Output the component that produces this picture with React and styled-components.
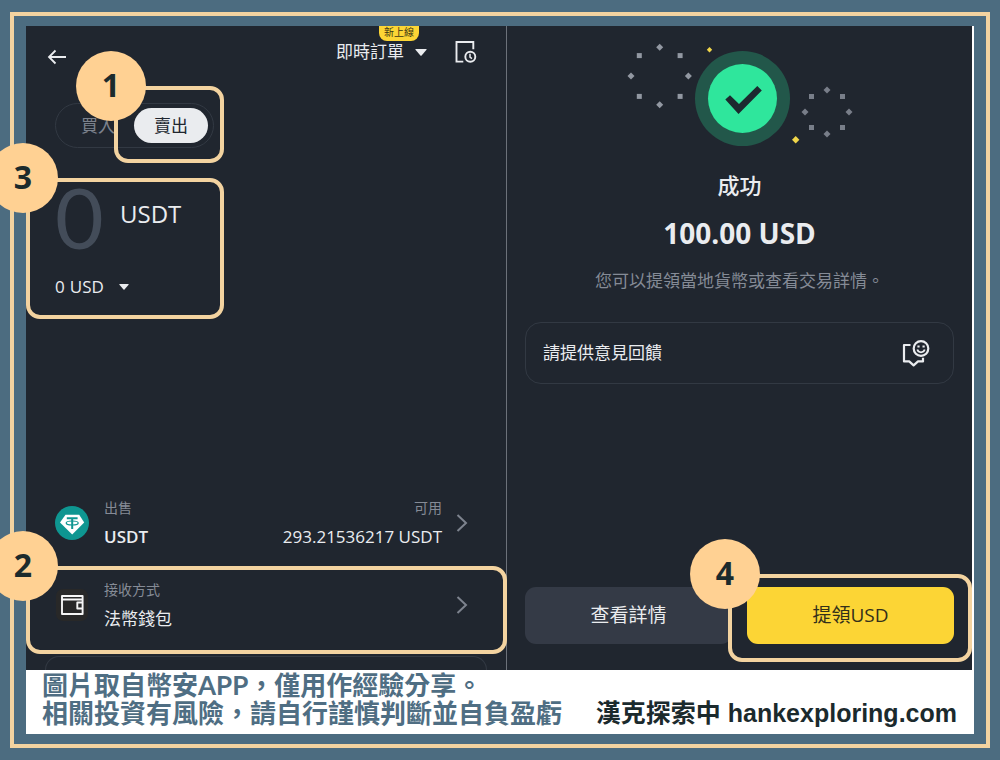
import React from 'react';
import styled, { createGlobalStyle } from 'styled-components';

const c = {
  slate: '#4c6c80',
  sand: '#f3d3a0',
  peach: '#ffd193',
  panel: '#20262f',
  line: '#323943',
  text: '#eaecef',
  muted: '#858b96',
  yellow: '#fcd535',
};

const GlobalStyle = createGlobalStyle`
  *, *::before, *::after { box-sizing: border-box; }
  body {
    margin: 0;
    background: ${c.slate};
    color: ${c.text};
    font-family: 'Open Sans', 'Noto Sans CJK TC', sans-serif;
    font-size: 17px;
    overflow-x: hidden;
  }
  button, input, select { font: inherit; color: inherit; margin: 0; padding: 0; border: 0; background: none; }
  svg { display: block; flex: none; }
  p, h2 { margin: 0; }
`;

const Page = styled.div`
  min-height: 100vh;
  padding: 12px 10px;
  display: flex;
`;

const Frame = styled.div`
  flex: 1;
  min-width: 0;
  border: 4px solid ${c.sand};
  padding: 10px 12px;
  display: flex;
  flex-direction: column;
`;

const Screens = styled.main`
  flex: 1;
  display: grid;
  grid-template-columns: minmax(0, 480fr) minmax(0, 466fr);
  padding-right: 2px;
  background: #fff;
`;

const SellPanel = styled.section`
  background: ${c.panel};
  display: flex;
  flex-direction: column;
`;

const DonePanel = styled.section`
  background: ${c.panel};
  border-left: 1px solid #6c717a;
  padding: 14px 18px 26px;
  display: flex;
  flex-direction: column;
  align-items: center;
`;

const Callout = styled.div`
  position: absolute;
  inset: ${(p) => p.$inset || '0'};
  border: 4px solid ${c.sand};
  border-radius: 14px;
  pointer-events: none;
  z-index: 2;
`;

const Step = styled.span`
  position: absolute;
  left: -42px;
  top: -39px;
  width: 70px;
  height: 70px;
  border-radius: 50%;
  background: ${c.peach};
  color: #1c2b2c;
  font-size: 32px;
  font-weight: 700;
  line-height: 68px;
  text-align: center;
`;

const Marker = ({ n, inset }) => (
  <Callout $inset={inset}>
    <Step>{n}</Step>
  </Callout>
);

const Header = styled.header`
  height: 52px;
  padding: 0 29px 0 20px;
  display: flex;
  align-items: center;
`;

const IconButton = styled.button`
  display: grid;
  place-items: center;
  cursor: pointer;
`;

const BackButton = styled(IconButton)`
  align-self: flex-end;
  width: 22px;
  height: 42px;
  margin-right: auto;
`;

const OrderType = styled.div`
  position: relative;
  display: flex;
  align-items: center;
  gap: 11px;
  margin-right: 28px;
`;

const PlainSelect = styled.select`
  appearance: none;
  outline: none;
  cursor: pointer;
  line-height: 24px;
  option { color: #000; }
`;

const NewBadge = styled.span`
  position: absolute;
  left: 43px;
  top: -14px;
  height: 15px;
  padding: 0 5px;
  border-radius: 0 0 8px 8px;
  background: ${c.yellow};
  color: #3a3413;
  font-size: 10px;
  line-height: 12px;
`;

const Toggle = styled.div`
  align-self: flex-start;
  display: flex;
  align-items: center;
  height: 45px;
  margin: 25px 0 0 29px;
  padding: 0 5px 0 15px;
  border: 1px solid ${c.line};
  border-radius: 23px;
`;

const ToggleSlot = styled.div`
  position: relative;
`;

const ToggleButton = styled.button`
  height: 35px;
  padding: 0 ${(p) => (p['aria-pressed'] ? 20 : 10)}px 2px;
  border-radius: 18px;
  background: ${(p) => (p['aria-pressed'] ? '#eaecef' : 'transparent')};
  color: ${(p) => (p['aria-pressed'] ? '#20262f' : '#7c828d')};
  margin-left: ${(p) => (p['aria-pressed'] ? 9 : 0)}px;
  cursor: pointer;
`;

const Amount = styled.div`
  position: relative;
  width: 198px;
  max-width: 100%;
  margin-top: 30px;
  padding: 0 0 3px 29px;
`;

const AmountRow = styled.label`
  display: flex;
  align-items: center;
  gap: 13px;
  height: 80px;
  padding-bottom: 4px;
`;

const AmountInput = styled.input`
  width: 52px;
  height: 80px;
  font-family: Lato, sans-serif;
  font-size: 84px;
  line-height: 80px;
  color: #434c59;
  outline: none;
`;

const Unit = styled.span`
  font-size: 24px;
  line-height: 28px;
  padding-bottom: 4px;
`;

const FiatRow = styled.label`
  display: flex;
  align-items: center;
  height: 58px;
  line-height: 24px;
  gap: 5px;
  svg { margin-left: 9px; }
`;

const Rows = styled.div`
  margin-top: auto;
`;

const Row = styled.div`
  position: relative;
  display: flex;
  align-items: center;
  height: 82px;
  padding: 0 38px 0 29px;
  svg:last-of-type { margin-left: 14px; }
`;

const RowText = styled.div`
  flex: ${(p) => (p.$end ? 'none' : 1)};
  text-align: ${(p) => (p.$end ? 'right' : 'left')};
  margin-left: 15px;
  padding-bottom: 2px;
  line-height: 29px;
`;

const Label = styled.div`
  font-size: 14px;
  color: ${c.muted};
`;

const Value = styled.div`
  font-weight: ${(p) => (p.$strong ? 600 : 400)};
`;

const NextCard = styled.div`
  height: 14px;
  margin: 10px 19px 0;
  border: 1px solid ${c.line};
  border-bottom: 0;
  border-radius: 14px 14px 0 0;
`;

const Title = styled.h2`
  font-size: 22px;
  font-weight: 500;
  line-height: 32px;
  margin-top: 21px;
`;

const Total = styled.p`
  font-size: 28px;
  font-weight: 700;
  line-height: 36px;
  margin-top: 14px;
`;

const Hint = styled.p`
  line-height: 24px;
  margin-top: 18px;
  color: ${c.muted};
`;

const Feedback = styled.button`
  width: 100%;
  height: 62px;
  margin-top: 29px;
  padding: 0 23px 0 17px;
  border: 1px solid ${c.line};
  border-radius: 16px;
  display: flex;
  align-items: center;
  justify-content: space-between;
  line-height: 24px;
  cursor: pointer;
`;

const Actions = styled.div`
  width: 100%;
  margin-top: auto;
  display: grid;
  grid-template-columns: 1fr 1fr;
  gap: 15px;
`;

const ActionSlot = styled.div`
  position: relative;
`;

const Action = styled.button`
  width: 100%;
  height: 57px;
  padding-bottom: 4px;
  border-radius: 11px;
  font-size: 19px;
  background: ${(p) => (p.$primary ? c.yellow : '#343a46')};
  color: ${(p) => (p.$primary ? '#332f1a' : c.text)};
  cursor: pointer;
`;

const Footer = styled.footer`
  background: #fff;
  min-height: 64px;
  padding: 0 17px 7px 16px;
  display: flex;
  align-items: flex-end;
  justify-content: space-between;
  font-weight: 700;
  line-height: 28px;
  white-space: nowrap;
`;

const Notice = styled.p`
  color: #4f6e83;
  font-family: Lato, 'Noto Sans CJK TC', sans-serif;
  font-size: 26px;
`;

const Site = styled.p`
  color: #1b2a2d;
  font-family: 'Liberation Sans', 'Noto Sans CJK TC', sans-serif;
  font-size: 25px;
`;

const Caret = ({ size }) => (
  <svg width={size} height={size / 2 + 1} viewBox="0 0 12 7" fill={c.text} aria-hidden="true">
    <path d="M1 0h10q1 0 .5.8L6.6 6.5q-.6.6-1.2 0L.5.8Q0 0 1 0z" />
  </svg>
);

const Chevron = () => (
  <svg width="12" height="18" viewBox="0 0 12 18" fill="none" stroke="#7d838e" strokeWidth="2" aria-hidden="true">
    <path d="M1.500 1l8.500 8-8.500 8" />
  </svg>
);

const BackIcon = () => (
  <svg width="20" height="16" viewBox="0 0 20 16" fill="none" stroke={c.text} strokeWidth="1.8" aria-hidden="true">
    <path d="M19 8H2M8.500 1.500L2 8l6.500 6.500" />
  </svg>
);

const HistoryIcon = () => (
  <svg width="22" height="22" viewBox="0 0 22 22" fill="none" stroke={c.text} strokeWidth="1.9" aria-hidden="true">
    <path d="M18.300 8.200V1H1.500v19.600h6.800" />
    <circle cx="15.300" cy="15.800" r="5" />
    <path d="M15 12.800v3.400l2 1.400" strokeWidth="1.500" />
  </svg>
);

const TetherIcon = () => (
  <svg width="34" height="34" viewBox="0 0 34 34" aria-hidden="true">
    <circle cx="17" cy="17" r="17" fill="#0e9691" />
    <path d="M10.500 8.700h13.700l5 7.700-12 12-12.200-12z" fill="#fff" />
    <g fill="none" stroke="#0e9691">
      <path d="M11.800 12.200h10.800M17.200 12v11" strokeWidth="2" />
      <ellipse cx="17.200" cy="17" rx="6" ry="2" strokeWidth="1.200" />
    </g>
  </svg>
);

const WalletIcon = () => (
  <svg width="34" height="34" viewBox="0 0 34 34" aria-hidden="true">
    <rect x="1" y="1" width="32" height="32" rx="7" fill="#282828" />
    <g fill="none" stroke="#f5f5f5" strokeWidth="1.900" strokeLinejoin="round">
      <path d="M7 8h20.600v18H7zM7 11.500h20.600M27.500 14.500h-5.200v6h5.200" />
    </g>
  </svg>
);

const FeedbackIcon = () => (
  <svg width="28" height="27" viewBox="0 0 28 27" fill="none" stroke={c.text} strokeWidth="2.200" strokeLinejoin="round" aria-hidden="true">
    <path d="M8.500 5H2v16.400h5.200l4.400 4 4.400-4h5v-3.600" />
    <circle cx="19" cy="8.500" r="7.300" />
    <path d="M15.300 9.600c1 3.600 6.400 3.600 7.400 0" strokeWidth="1.700" />
    <path d="M16.500 5.500v2M21.600 5.500v2" />
  </svg>
);

const Sparkles = ({ cx, cy, r, d, color }) => (
  <g fill={color}>
    {[[0, -r], [-r, 0], [r, 0], [0, r]].map(([x, y]) => (
      <path key={`${x},${y}`} d={`M${cx + x} ${cy + y - 3.500}l3.500 3.500-3.500 3.500-3.500-3.500z`} />
    ))}
    {[[-d, -d], [d, -d], [-d, d], [d, d]].map(([x, y]) => (
      <rect key={`${x},${y}`} x={cx + x - 2.500} y={cy + y - 2.500} width="5" height="5" />
    ))}
  </g>
);

const SuccessArt = () => (
  <svg width="232" height="108" viewBox="624 40 232 108" role="img" aria-label="成功">
    <circle cx="742.500" cy="98.500" r="47.500" fill="#22574a" />
    <circle cx="742.500" cy="98.500" r="34.500" fill="#2fe69c" />
    <path d="M725.300 99.500l4.700-4.300 9 8.700L757.300 86l4.500 4.400L738.500 114z" fill="#1c2a2f" />
    <Sparkles cx={659.7} cy={76} r={28.7} d={20.4} color="#9298a2" />
    <Sparkles cx={827} cy={112} r={22} d={15.5} color="#787e89" />
    <g fill="#f0d64a">
      <path d="M709.500 47l2.700 2.700-2.700 2.700-2.700-2.700z" />
      <path d="M795.700 136l3.700 3.700-3.700 3.700-3.700-3.700z" />
    </g>
  </svg>
);

export default function App() {
  return (
    <Page>
      <GlobalStyle />
      <Frame>
        <Screens>
          <SellPanel>
            <Header>
              <BackButton aria-label="返回"><BackIcon /></BackButton>
              <OrderType>
                <PlainSelect aria-label="訂單類型"><option>即時訂單</option></PlainSelect>
                <Caret size={12} />
                <NewBadge>新上線</NewBadge>
              </OrderType>
              <IconButton aria-label="訂單記錄"><HistoryIcon /></IconButton>
            </Header>
            <Toggle>
              <ToggleButton aria-pressed={false}>買入</ToggleButton>
              <ToggleSlot>
                <ToggleButton aria-pressed={true}>賣出</ToggleButton>
                <Marker n={1} inset="-22px -16px -20px -11px" />
              </ToggleSlot>
            </Toggle>
            <Amount>
              <AmountRow>
                <AmountInput defaultValue="0" inputMode="decimal" />
                <Unit>USDT</Unit>
              </AmountRow>
              <FiatRow>
                0
                <PlainSelect><option>USD</option></PlainSelect>
                <Caret size={10} />
              </FiatRow>
              <Marker n={3} />
            </Amount>
            <Rows>
              <Row>
                <TetherIcon />
                <RowText>
                  <Label>出售</Label>
                  <Value $strong>USDT</Value>
                </RowText>
                <RowText $end>
                  <Label>可用</Label>
                  <Value>293.21536217 USDT</Value>
                </RowText>
                <Chevron />
              </Row>
              <Row>
                <WalletIcon />
                <RowText>
                  <Label>接收方式</Label>
                  <Value>法幣錢包</Value>
                </RowText>
                <Chevron />
                <Marker n={2} inset="2px -1px -8px 0" />
              </Row>
              <NextCard />
            </Rows>
          </SellPanel>
          <DonePanel>
            <SuccessArt />
            <Title>成功</Title>
            <Total>100.00 USD</Total>
            <Hint>您可以提領當地貨幣或查看交易詳情。</Hint>
            <Feedback>
              請提供意見回饋
              <FeedbackIcon />
            </Feedback>
            <Actions>
              <Action>查看詳情</Action>
              <ActionSlot>
                <Action $primary>提領USD</Action>
                <Marker n={4} inset="-13px -18px -18px -19px" />
              </ActionSlot>
            </Actions>
          </DonePanel>
        </Screens>
        <Footer>
          <Notice>
            圖片取自幣安APP，僅用作經驗分享。
            <br />
            相關投資有風險，請自行謹慎判斷並自負盈虧
          </Notice>
          <Site>漢克探索中 hankexploring.com</Site>
        </Footer>
      </Frame>
    </Page>
  );
}
